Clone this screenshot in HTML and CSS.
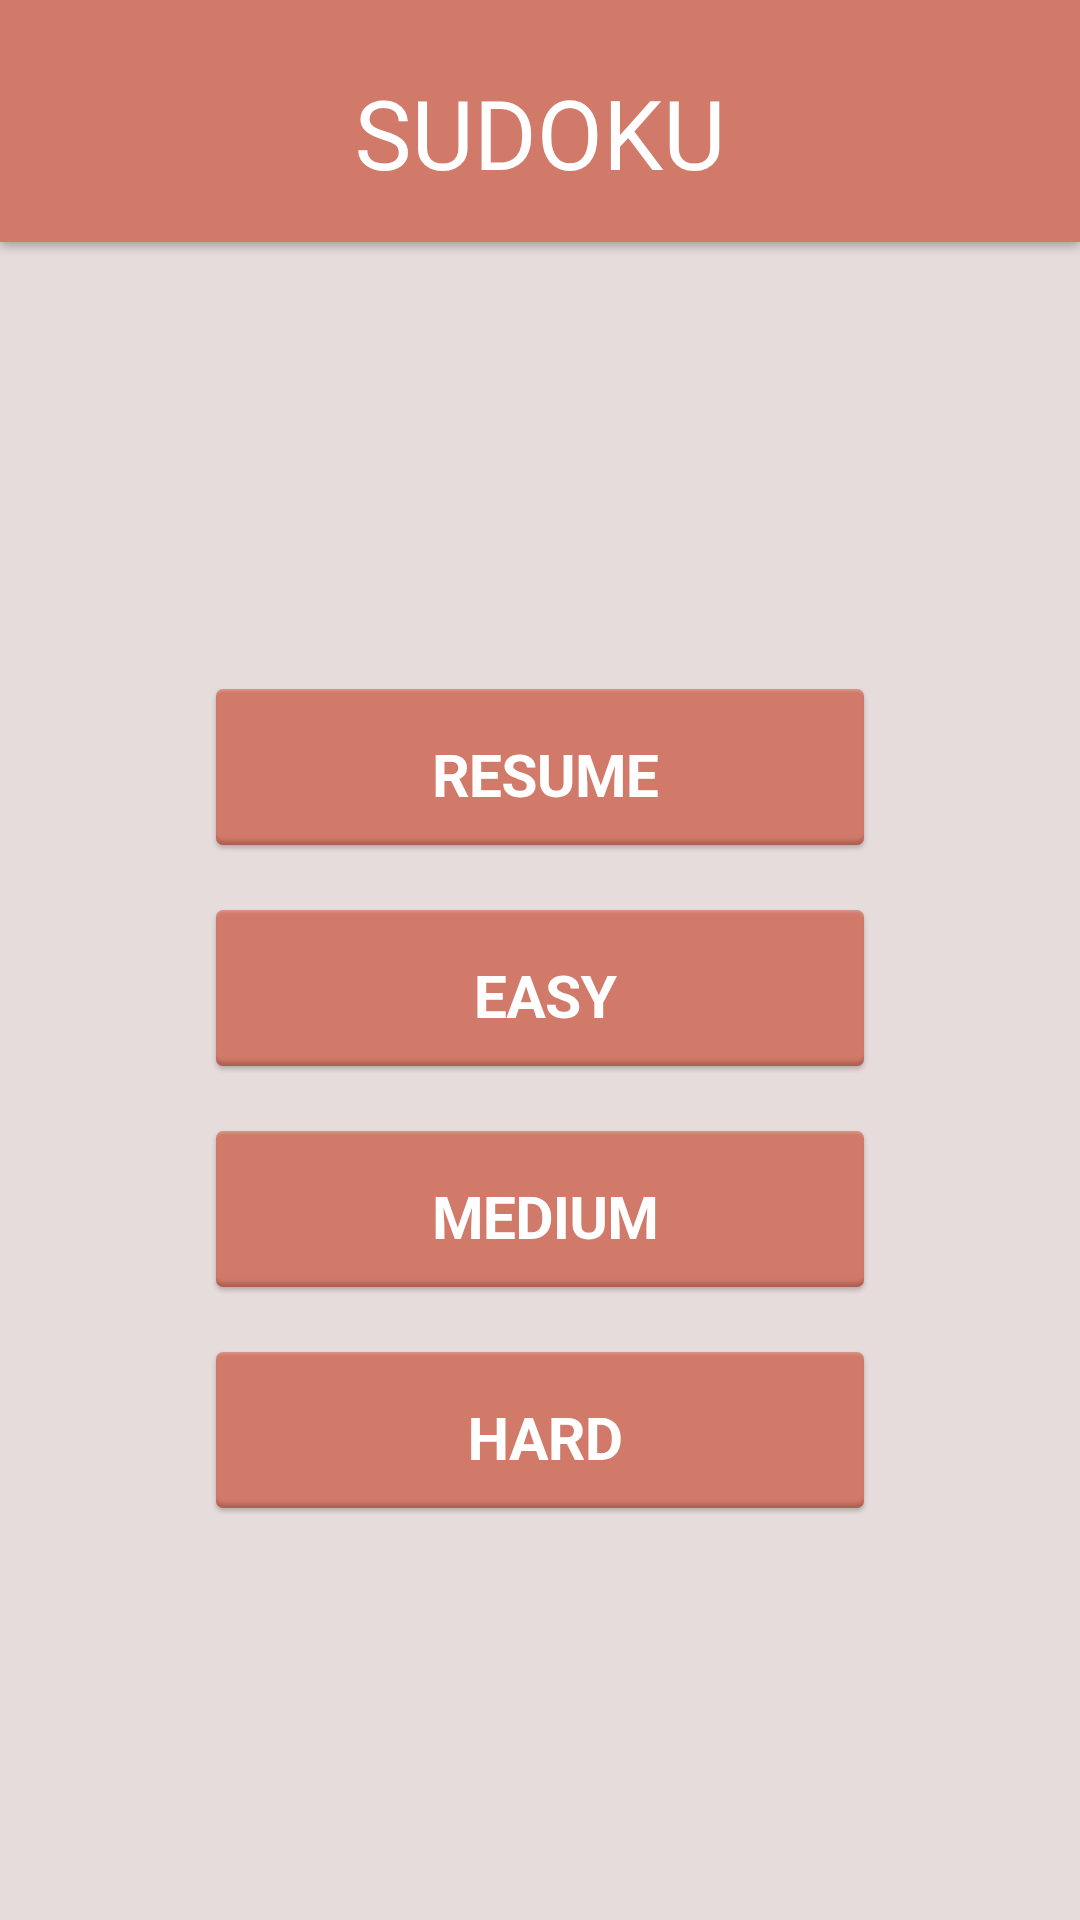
FILE: index.html
```html
<!DOCTYPE html>
<html>
<head>
<meta charset="utf-8">
<link rel="stylesheet" href="styles.css">
</head>
<body>
<header class="app-bar"><h1 class="title">SUDOKU</h1></header>
<main class="menu">
  <button class="menu-btn">RESUME</button>
  <button class="menu-btn">EASY</button>
  <button class="menu-btn">MEDIUM</button>
  <button class="menu-btn">HARD</button>
</main>
</body>
</html>
```
FILE: styles.css
```css
html, body {
  margin: 0;
  padding: 0;
}
body {
  width: 1080px;
  height: 1920px;
  background: #e6dcdb;
  font-family: Roboto, "Liberation Sans", sans-serif;
  overflow: hidden;
}
.app-bar {
  position: relative;
  z-index: 1;
  height: 242px;
  box-sizing: border-box;
  padding-top: 32px;
  background: #d17a6a;
  display: flex;
  align-items: center;
  justify-content: center;
  box-shadow: 0 4px 10px rgba(0, 0, 0, 0.28);
}
.title {
  margin: 0;
  font-size: 96px;
  font-weight: 400;
  color: #ffffff;
  line-height: 1;
}
.menu {
  display: flex;
  flex-direction: column;
  align-items: center;
  gap: 65px;
  padding-top: 447px;
}
.menu-btn {
  width: 648px;
  height: 156px;
  box-sizing: border-box;
  padding: 19px 0 0 10px;
  border: none;
  border-radius: 7px;
  background: #d17a6a;
  color: #ffffff;
  font-family: Roboto, "Liberation Sans", sans-serif;
  font-size: 59px;
  font-weight: 700;
  letter-spacing: -0.8px;
  line-height: 1;
  display: flex;
  align-items: center;
  justify-content: center;
  box-shadow:
    inset 0 4px 3px -2px rgba(255, 255, 255, 0.2),
    inset 0 -7px 4px -3px rgba(90, 30, 20, 0.3),
    0 3px 5px rgba(0, 0, 0, 0.22);
}
```
